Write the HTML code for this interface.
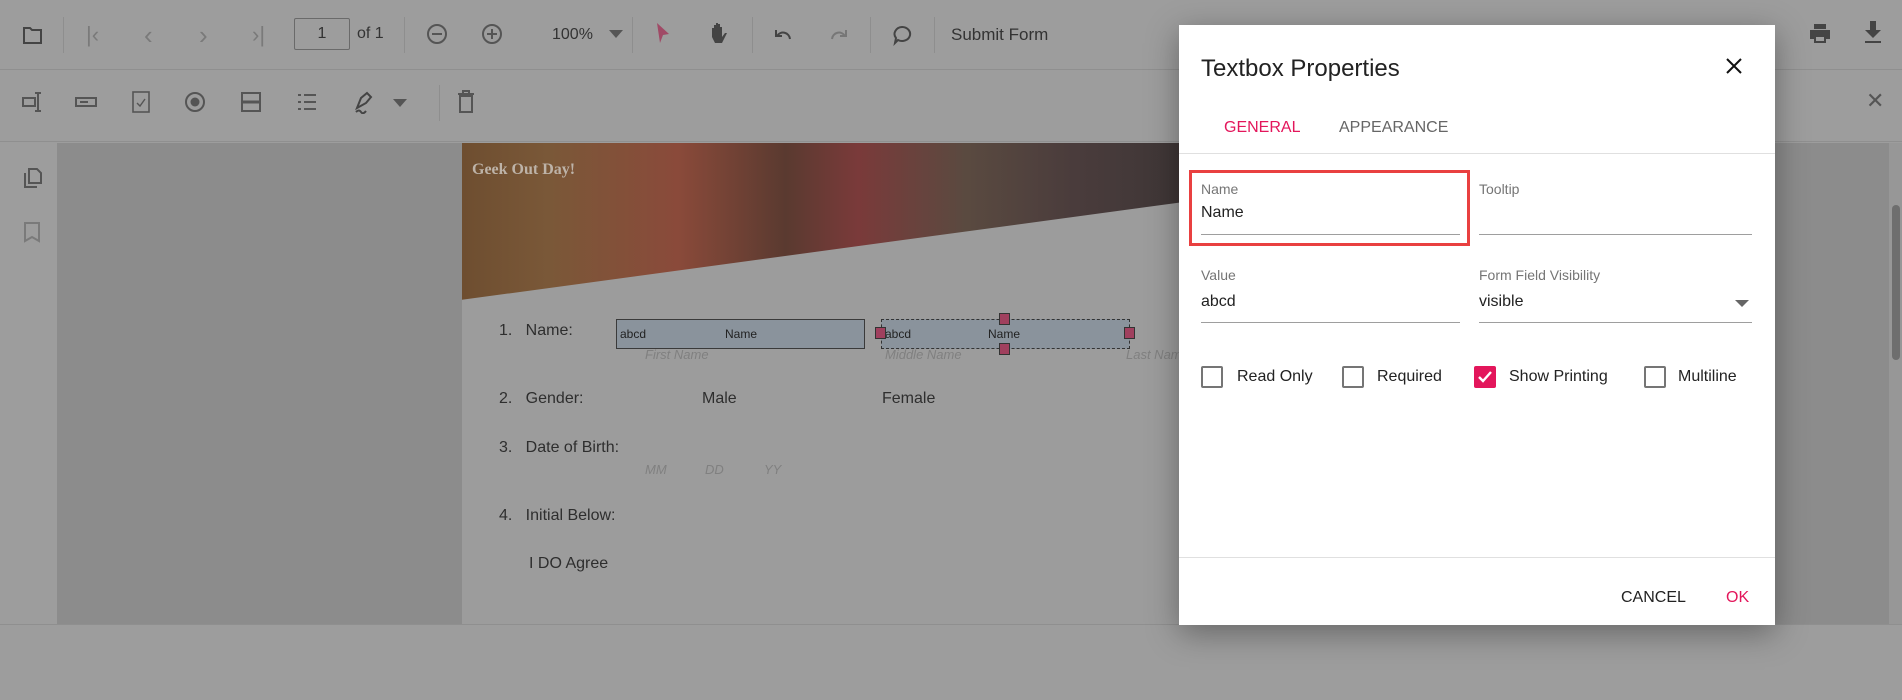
<!DOCTYPE html>
<html><head><meta charset="utf-8"><style>
*{margin:0;padding:0;box-sizing:border-box}
body{width:1902px;height:700px;position:relative;overflow:hidden;background:#9d9d9d;font-family:"Liberation Sans",Arial,sans-serif;color:#333}
.a{position:absolute}
.ic{position:absolute;color:#555;font-size:18px;line-height:1}
.sep{position:absolute;width:1px;background:#8e8e8e}
.t{position:absolute;white-space:nowrap}
</style></head><body>
<!-- toolbar 1 -->
<div class="a" style="left:0;top:0;width:1902px;height:70px;background:#9d9d9d;border-bottom:1px solid #8f8f8f"></div>
<svg class="a" style="left:22px;top:24px" width="22" height="22" viewBox="0 0 22 22"><path d="M2 4h6l2 2h9v13H2z" fill="none" stroke="#444" stroke-width="2"/></svg>
<div class="sep" style="left:63px;top:17px;height:36px"></div>
<div class="t" style="left:86px;top:22px;font-size:22px;color:#7a7a7a">|&lsaquo;</div>
<div class="t" style="left:144px;top:20px;font-size:26px;color:#7a7a7a">&lsaquo;</div>
<div class="t" style="left:199px;top:20px;font-size:26px;color:#7a7a7a">&rsaquo;</div>
<div class="t" style="left:252px;top:22px;font-size:22px;color:#7a7a7a">&rsaquo;|</div>
<div class="a" style="left:294px;top:18px;width:56px;height:32px;border:1px solid #6a6a6a;border-radius:2px;font-size:16px;text-align:center;line-height:30px;color:#333">1</div>
<div class="t" style="left:357px;top:25px;font-size:16px;color:#333">of 1</div>
<div class="sep" style="left:404px;top:17px;height:36px"></div>
<svg class="a" style="left:426px;top:23px" width="22" height="22"><circle cx="11" cy="11" r="9" fill="none" stroke="#555" stroke-width="2"/><path d="M6 11h10" stroke="#555" stroke-width="2"/></svg>
<svg class="a" style="left:481px;top:23px" width="22" height="22"><circle cx="11" cy="11" r="9" fill="none" stroke="#555" stroke-width="2"/><path d="M6 11h10M11 6v10" stroke="#555" stroke-width="2"/></svg>
<div class="t" style="left:552px;top:26px;font-size:16px;color:#333">100%</div>
<svg class="a" style="left:609px;top:30px" width="14" height="9"><path d="M0 0h14L7 8z" fill="#555"/></svg>
<div class="sep" style="left:632px;top:17px;height:36px"></div>
<svg class="a" style="left:655px;top:22px" width="16" height="24"><path d="M2 1l12 11-6 1-3 8z" fill="#a04a66"/></svg>
<svg class="a" style="left:709px;top:21px" width="20" height="26"><path d="M3 12V7h2v7V4h2v9V2h2v11V3h2v10V6h2v10l3-4h2l-5 10H6L3 16z" fill="#444"/></svg>
<div class="sep" style="left:752px;top:17px;height:36px"></div>
<svg class="a" style="left:773px;top:26px" width="20" height="16"><path d="M3 4v6h6M4 10a7 7 0 0 1 13 3" fill="none" stroke="#444" stroke-width="2"/></svg>
<svg class="a" style="left:829px;top:26px" width="20" height="16"><path d="M17 4v6h-6M16 10a7 7 0 0 0-13 3" fill="none" stroke="#777" stroke-width="2"/></svg>
<div class="sep" style="left:870px;top:17px;height:36px"></div>
<svg class="a" style="left:891px;top:24px" width="22" height="22"><path d="M11 3a8 7 0 1 1-4 13l-3 3 1-5A8 7 0 0 1 11 3z" fill="none" stroke="#444" stroke-width="2"/></svg>
<div class="sep" style="left:934px;top:17px;height:36px"></div>
<div class="t" style="left:951px;top:25px;font-size:17px;color:#333">Submit Form</div>
<svg class="a" style="left:1808px;top:22px" width="24" height="22"><path d="M6 2h12v5H6zM2 8h20v9h-4v4H6v-4H2z" fill="#444"/><rect x="8" y="15" width="8" height="4" fill="#9d9d9d"/></svg>
<svg class="a" style="left:1862px;top:19px" width="22" height="26"><path d="M8 2h6v9h5l-8 8-8-8h5zM3 22h16v2H3z" fill="#444"/></svg>
<!-- toolbar 2 -->
<div class="a" style="left:0;top:71px;width:1902px;height:71px;background:#9d9d9d;border-bottom:1px solid #8f8f8f"></div>
<svg class="a" style="left:21px;top:91px" width="24" height="22"><path d="M2 7h12v8H2zM17 2v18M14 2h6M14 20h6" fill="none" stroke="#555" stroke-width="2"/></svg>
<svg class="a" style="left:75px;top:96px" width="22" height="12"><rect x="1" y="2" width="20" height="8" fill="none" stroke="#555" stroke-width="2"/><path d="M5 6h8" stroke="#555" stroke-width="2"/></svg>
<svg class="a" style="left:131px;top:91px" width="20" height="22"><rect x="2" y="1" width="16" height="20" fill="none" stroke="#555" stroke-width="1.6"/><path d="M6 12l3 3 5-7" fill="none" stroke="#555" stroke-width="1.4"/></svg>
<svg class="a" style="left:184px;top:91px" width="22" height="22"><circle cx="11" cy="11" r="9" fill="none" stroke="#555" stroke-width="2"/><circle cx="11" cy="11" r="4.5" fill="#555"/></svg>
<svg class="a" style="left:240px;top:91px" width="22" height="22"><rect x="2" y="2" width="18" height="18" fill="none" stroke="#555" stroke-width="2"/><path d="M2 11h18" stroke="#555" stroke-width="3"/></svg>
<svg class="a" style="left:296px;top:92px" width="22" height="20"><path d="M2 3h3M8 3h12M2 10h3M8 10h12M2 17h3M8 17h12" stroke="#555" stroke-width="2"/></svg>
<svg class="a" style="left:353px;top:90px" width="22" height="24"><path d="M4 18l4-10 6-5 4 4-5 6-9 5zM3 22q3-3 5 0t5-1" fill="none" stroke="#444" stroke-width="2"/></svg>
<svg class="a" style="left:393px;top:99px" width="14" height="9"><path d="M0 0h14L7 8z" fill="#555"/></svg>
<div class="sep" style="left:439px;top:85px;height:36px"></div>
<svg class="a" style="left:456px;top:90px" width="20" height="24"><path d="M2 4h16M7 4V1h6v3M4 6h12v16H4z" fill="none" stroke="#555" stroke-width="2"/></svg>
<div class="t" style="left:1866px;top:88px;font-size:22px;color:#555">&#x2715;</div>
<!-- sidebar & content -->
<div class="a" style="left:0;top:143px;width:57px;height:481px;background:#9d9d9d"></div>
<svg class="a" style="left:22px;top:167px" width="22" height="22"><path d="M3 6v14h12M7 2h8l4 4v10H7z" fill="none" stroke="#555" stroke-width="2"/></svg>
<svg class="a" style="left:23px;top:221px" width="18" height="22"><path d="M2 2h14v18l-7-4-7 4z" fill="none" stroke="#7a7a7a" stroke-width="2"/></svg>
<div class="a" style="left:57px;top:143px;width:1832px;height:481px;background:#8c8c8c"></div>
<div class="a" style="left:0;top:624px;width:1902px;height:76px;background:#9d9d9d;border-top:1px solid #8f8f8f"></div>
<!-- scrollbar -->
<div class="a" style="left:1889px;top:143px;width:13px;height:481px;background:#979797"></div>
<div class="a" style="left:1892px;top:205px;width:8px;height:155px;background:#6e6e6e;border-radius:4px"></div>
<!-- page -->
<div class="a" style="left:462px;top:143px;width:720px;height:481px;background:#9c9c9c"></div>
<div class="a" style="left:462px;top:143px;width:720px;height:160px;background:linear-gradient(90deg,#6e4e30 0%,#7a5838 12%,#8a4a3a 30%,#5a3a30 45%,#7a3a3a 55%,#5a4a40 70%,#4a3c3c 85%,#3e3636 100%);clip-path:polygon(0 0,100% 0,100% 37%,0 98%)"></div>
<div class="t" style="left:472px;top:161px;font-family:'Liberation Serif',serif;font-weight:bold;font-size:16px;color:#bdb3a8">Geek Out Day!</div>
<div class="t" style="left:499px;top:322px;font-size:16px;color:#2e2e2e">1.&nbsp;&nbsp; Name:</div>
<div class="a" style="left:616px;top:319px;width:249px;height:30px;background:#8a939c;border:1px solid #3a3a3a;font-size:12px;color:#222"><span class="t" style="left:3px;top:7px">abcd</span><span class="t" style="left:108px;top:7px">Name</span></div>
<div class="a" style="left:881px;top:319px;width:249px;height:30px;background:#8a939c;border:1px dashed #333;font-size:12px;color:#222"><span class="t" style="left:3px;top:7px">abcd</span><span class="t" style="left:106px;top:7px">Name</span></div>
<div class="a" style="left:875px;top:327px;width:11px;height:12px;background:#a0405e;border:1px solid #333"></div>
<div class="a" style="left:1124px;top:327px;width:11px;height:12px;background:#a0405e;border:1px solid #333"></div>
<div class="a" style="left:999px;top:313px;width:11px;height:12px;background:#a0405e;border:1px solid #333"></div>
<div class="a" style="left:999px;top:343px;width:11px;height:12px;background:#a0405e;border:1px solid #333"></div>
<div class="t" style="left:645px;top:347px;font-size:13px;font-style:italic;color:#808080">First Name</div>
<div class="t" style="left:885px;top:347px;font-size:13px;font-style:italic;color:#808080">Middle Name</div>
<div class="t" style="left:1126px;top:347px;font-size:13px;font-style:italic;color:#808080">Last Name</div>
<div class="t" style="left:499px;top:390px;font-size:16px;color:#2e2e2e">2.&nbsp;&nbsp; Gender:</div>
<div class="t" style="left:702px;top:390px;font-size:16px;color:#2e2e2e">Male</div>
<div class="t" style="left:882px;top:390px;font-size:16px;color:#2e2e2e">Female</div>
<div class="t" style="left:499px;top:439px;font-size:16px;color:#2e2e2e">3.&nbsp;&nbsp; Date of Birth:</div>
<div class="t" style="left:645px;top:462px;font-size:13px;font-style:italic;color:#808080">MM</div>
<div class="t" style="left:705px;top:462px;font-size:13px;font-style:italic;color:#808080">DD</div>
<div class="t" style="left:764px;top:462px;font-size:13px;font-style:italic;color:#808080">YY</div>
<div class="t" style="left:499px;top:507px;font-size:16px;color:#2e2e2e">4.&nbsp;&nbsp; Initial Below:</div>
<div class="t" style="left:529px;top:555px;font-size:16px;color:#2e2e2e">I DO Agree</div>
<!-- dialog -->
<div class="a" style="left:1179px;top:25px;width:596px;height:600px;background:#fff;box-shadow:0 8px 30px rgba(0,0,0,.35)">
 <div class="t" style="left:22px;top:30px;font-size:24px;color:#222">Textbox Properties</div>
 <svg class="a" style="left:547px;top:33px" width="16" height="16"><path d="M1 1l14 14M15 1L1 15" stroke="#111" stroke-width="2"/></svg>
 <div class="t" style="left:45px;top:94px;font-size:16px;color:#e3165b">GENERAL</div>
 <div class="t" style="left:160px;top:94px;font-size:16px;color:#666">APPEARANCE</div>
 <div class="a" style="left:0;top:128px;width:596px;height:1px;background:#e0e0e0"></div>
 <div class="a" style="left:10px;top:145px;width:281px;height:76px;border:3px solid #e94040"></div>
 <div class="t" style="left:22px;top:156px;font-size:14px;color:#757575">Name</div>
 <div class="t" style="left:22px;top:179px;font-size:16px;color:#222">Name</div>
 <div class="a" style="left:22px;top:209px;width:259px;height:1px;background:#9e9e9e"></div>
 <div class="t" style="left:300px;top:156px;font-size:14px;color:#757575">Tooltip</div>
 <div class="a" style="left:300px;top:209px;width:273px;height:1px;background:#9e9e9e"></div>
 <div class="t" style="left:22px;top:242px;font-size:14px;color:#757575">Value</div>
 <div class="t" style="left:22px;top:268px;font-size:16px;color:#222">abcd</div>
 <div class="a" style="left:22px;top:297px;width:259px;height:1px;background:#9e9e9e"></div>
 <div class="t" style="left:300px;top:242px;font-size:14px;color:#757575">Form Field Visibility</div>
 <div class="t" style="left:300px;top:268px;font-size:16px;color:#222">visible</div>
 <svg class="a" style="left:556px;top:275px" width="14" height="8"><path d="M0 0h14L7 7z" fill="#666"/></svg>
 <div class="a" style="left:300px;top:297px;width:273px;height:1px;background:#9e9e9e"></div>
 <div class="a" style="left:22px;top:341px;width:22px;height:22px;border:2px solid #757575;border-radius:2px"></div>
 <div class="t" style="left:58px;top:343px;font-size:16px;color:#222">Read Only</div>
 <div class="a" style="left:163px;top:341px;width:22px;height:22px;border:2px solid #757575;border-radius:2px"></div>
 <div class="t" style="left:198px;top:343px;font-size:16px;color:#222">Required</div>
 <div class="a" style="left:295px;top:341px;width:22px;height:22px;background:#e3165b;border-radius:2px"></div>
 <svg class="a" style="left:298px;top:345px" width="16" height="14"><path d="M2 7l4 4 8-9" fill="none" stroke="#fff" stroke-width="2.4"/></svg>
 <div class="t" style="left:330px;top:343px;font-size:16px;color:#222">Show Printing</div>
 <div class="a" style="left:465px;top:341px;width:22px;height:22px;border:2px solid #757575;border-radius:2px"></div>
 <div class="t" style="left:499px;top:343px;font-size:16px;color:#222">Multiline</div>
 <div class="a" style="left:0;top:532px;width:596px;height:1px;background:#e0e0e0"></div>
 <div class="t" style="left:442px;top:564px;font-size:16px;color:#222">CANCEL</div>
 <div class="t" style="left:547px;top:564px;font-size:16px;color:#e3165b">OK</div>
</div>
</body></html>
